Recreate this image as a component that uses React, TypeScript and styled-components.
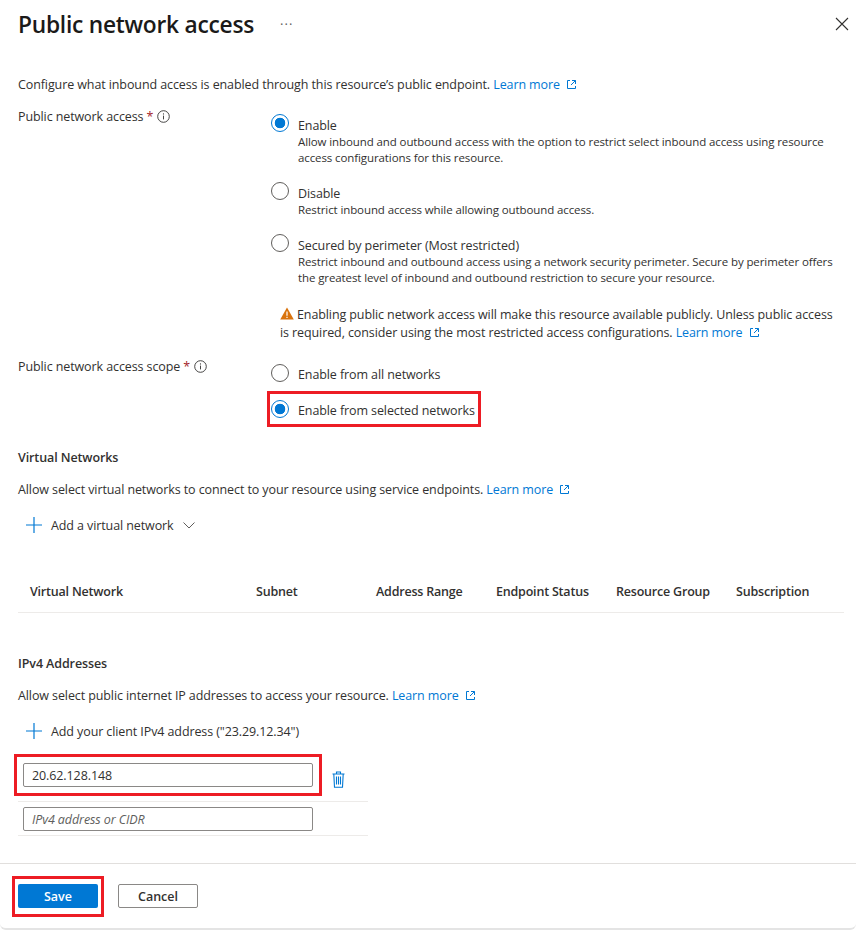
import React from "react";
import styled, { createGlobalStyle } from "styled-components";

const GlobalStyle = createGlobalStyle`
  html, body {
    margin: 0;
    padding: 0;
    background: #fff;
  }
  body {
    font-family: "Open Sans", "Liberation Sans", sans-serif;
    font-size: 12.5px;
    color: #323130;
    letter-spacing: -0.1px;
  }
`;

const ExternalIcon = () => (
  <ExternalSvg viewBox="0 0 11 11" width="11" height="11">
    <path d="M4 1.5H1.5v8h8V7M6 1.5h3.5V5M9.5 1.5 5 6" fill="none" stroke="#0078d4" strokeWidth="1" />
  </ExternalSvg>
);

const LearnMore = () => (
  <Link>
    Learn more <ExternalIcon />
  </Link>
);

const InfoIcon = () => (
  <InfoSvg viewBox="0 0 13 13" width="13" height="13">
    <circle cx="6.5" cy="6.5" r="5.8" fill="none" stroke="#323130" strokeWidth="0.9" />
    <path d="M6.5 5.6v3.8" stroke="#323130" strokeWidth="0.9" />
    <circle cx="6.5" cy="3.9" r="0.6" fill="#323130" />
  </InfoSvg>
);

const PlusIcon = () => (
  <svg viewBox="0 0 16 16" width="16" height="16">
    <path d="M8 0v16M0 8h16" stroke="#0078d4" strokeWidth="1.2" />
  </svg>
);

const Option = ({
  title,
  checked,
  children,
}: {
  title: string;
  checked?: boolean;
  children?: React.ReactNode;
}) => (
  <OptionRow>
    <Radio $checked={checked} />
    <div>
      <OptionTitle>{title}</OptionTitle>
      {children && <OptionDesc>{children}</OptionDesc>}
    </div>
  </OptionRow>
);

const App = () => {
  return (
    <Page>
      <GlobalStyle />
      <Header>
        <Title>Public network access</Title>
        <More>···</More>
        <CloseButton viewBox="0 0 14 14" width="14" height="14">
          <path d="M1 1l12 12M13 1L1 13" stroke="#323130" strokeWidth="1.1" />
        </CloseButton>
      </Header>

      <Body>
        <Intro>
          Configure what inbound access is enabled through this resource’s public endpoint. <LearnMore />
        </Intro>

        <FormRow>
          <FieldLabel>
            Public network access <Required>*</Required>
            <InfoIcon />
          </FieldLabel>
          <Options>
            <Option title="Enable" checked>
              Allow inbound and outbound access with the option to restrict select inbound access using resource
              access configurations for this resource.
            </Option>
            <Option title="Disable">Restrict inbound access while allowing outbound access.</Option>
            <Option title="Secured by perimeter (Most restricted)">
              Restrict inbound and outbound access using a network security perimeter. Secure by perimeter offers
              the greatest level of inbound and outbound restriction to secure your resource.
            </Option>
          </Options>
        </FormRow>

        <Warning>
          <WarningSvg viewBox="0 0 14 13" width="14" height="13">
            <path d="M7 0.5 13.8 12.5H0.2Z" fill="#d9730d" />
            <path d="M7 4.5v4.2M7 9.8v1.3" stroke="#fff" strokeWidth="1.2" />
          </WarningSvg>
          Enabling public network access will make this resource available publicly. Unless public access is
          required, consider using the most restricted access configurations. <LearnMore />
        </Warning>

        <ScopeRow>
          <FieldLabel>
            Public network access scope <Required>*</Required>
            <InfoIcon />
          </FieldLabel>
          <ScopeOptions>
            <ScopeOption>
              <Radio />
              <span>Enable from all networks</span>
            </ScopeOption>
            <HighlightedOption>
              <Radio $checked />
              <span>Enable from selected networks</span>
            </HighlightedOption>
          </ScopeOptions>
        </ScopeRow>

        <SectionTitle $top={21}>Virtual Networks</SectionTitle>
        <SectionText>
          Allow select virtual networks to connect to your resource using service endpoints. <LearnMore />
        </SectionText>
        <AddAction>
          <PlusIcon />
          <span>Add a virtual network</span>
          <svg viewBox="0 0 12 7" width="12" height="7">
            <path d="M0.5 0.5 6 6l5.5-5.5" fill="none" stroke="#605e5c" strokeWidth="1" />
          </svg>
        </AddAction>

        <TableHead>
          <span>Virtual Network</span>
          <span>Subnet</span>
          <span>Address Range</span>
          <span>Endpoint Status</span>
          <span>Resource Group</span>
          <span>Subscription</span>
        </TableHead>

        <SectionTitle $top={41}>IPv4 Addresses</SectionTitle>
        <SectionText>
          Allow select public internet IP addresses to access your resource. <LearnMore />
        </SectionText>
        <AddAction>
          <PlusIcon />
          <span>Add your client IPv4 address ("23.29.12.34")</span>
        </AddAction>

        <AddressList>
          <AddressRow $top={6} $bottom={13}>
            <InputHighlight>
              <AddressInput readOnly value="20.62.128.148" />
            </InputHighlight>
            <TrashButton viewBox="0 0 13 17" width="13" height="17">
              <path
                d="M0.5 3h12M4.5 3V1h4v2M1.8 3l0.7 13.2h8L11.2 3M4.5 5.5v8M6.5 5.5v8M8.5 5.5v8"
                fill="none"
                stroke="#0078d4"
                strokeWidth="1.1"
              />
            </TrashButton>
          </AddressRow>
          <AddressRow $top={5} $bottom={4}>
            <AddressInput readOnly placeholder="IPv4 address or CIDR" />
          </AddressRow>
        </AddressList>
      </Body>

      <Footer>
        <ButtonHighlight>
          <SaveButton>Save</SaveButton>
        </ButtonHighlight>
        <CancelButton>Cancel</CancelButton>
      </Footer>
    </Page>
  );
};

const Page = styled.div`
  width: 856px;
  height: 930px;
  box-sizing: border-box;
  border-bottom: 2px solid #e4e4e4;
  border-bottom-left-radius: 6px;
  border-bottom-right-radius: 6px;
  display: flex;
  flex-direction: column;
  overflow: hidden;
`;

const Header = styled.div`
  display: flex;
  align-items: center;
  height: 48px;
  padding: 0 7px 0 18px;
`;

const Title = styled.h1`
  margin: 0;
  font-size: 22.75px;
  font-weight: 600;
  color: #1b1a19;
  letter-spacing: -0.25px;
`;

const More = styled.span`
  margin-left: 26px;
  font-size: 13px;
  color: #605e5c;
  letter-spacing: 1px;
`;

const CloseButton = styled.svg`
  margin-left: auto;
`;

const Body = styled.div`
  flex: 1;
  padding: 27px 12px 0 18px;
`;

const Intro = styled.div`
  line-height: 20px;
`;

const Link = styled.span`
  color: #0078d4;
  white-space: nowrap;
`;

const ExternalSvg = styled.svg`
  margin-left: 3px;
  vertical-align: -1px;
`;

const InfoSvg = styled.svg`
  margin-left: 4px;
  vertical-align: -2px;
`;

const FormRow = styled.div`
  display: grid;
  grid-template-columns: 253px 1fr;
  margin-top: 2px;
`;

const FieldLabel = styled.div`
  padding-top: 10px;
  line-height: 20px;
`;

const Required = styled.span`
  color: #a4262c;
`;

const Options = styled.div`
  display: flex;
  flex-direction: column;
  gap: 19px;
  padding-top: 20px;
`;

const OptionRow = styled.div`
  display: flex;
  gap: 9px;
`;

const Radio = styled.span<{ $checked?: boolean }>`
  flex: none;
  width: 18px;
  height: 18px;
  box-sizing: border-box;
  border-radius: 50%;
  border: 1px solid ${(p) => (p.$checked ? "#0078d4" : "#605e5c")};
  background: ${(p) =>
    p.$checked ? "radial-gradient(circle, #0078d4 0 5px, #fff 5.6px)" : "#fff"};
  margin-top: -3px;
`;

const OptionTitle = styled.div`
  line-height: 18px;
`;

const OptionDesc = styled.div`
  font-size: 11.5px;
  line-height: 16px;
  width: 546px;
  margin-top: -1px;
`;

const Warning = styled.div`
  margin: 20px 4px 0 262px;
  line-height: 18px;
`;

const WarningSvg = styled.svg`
  margin-right: 3px;
  vertical-align: -1px;
`;

const ScopeRow = styled.div`
  display: grid;
  grid-template-columns: 249px 1fr;
  margin-top: 5px;
`;

const ScopeOptions = styled.div`
  display: flex;
  flex-direction: column;
  align-items: flex-start;
  padding-top: 17px;
`;

const ScopeOption = styled.div`
  display: flex;
  align-items: center;
  gap: 9px;
  height: 20px;
  padding-left: 4px;
`;

const HighlightedOption = styled(ScopeOption)`
  box-sizing: content-box;
  height: 28px;
  margin-top: 7px;
  padding: 2px 3px 0 1px;
  border: 3px solid #ed1c24;
`;

const SectionTitle = styled.div<{ $top: number }>`
  margin-top: ${(p) => p.$top}px;
  font-weight: 600;
  line-height: 20px;
`;

const SectionText = styled.div`
  margin-top: 12px;
  line-height: 20px;
`;

const AddAction = styled.div`
  display: flex;
  align-items: center;
  gap: 9px;
  height: 20px;
  margin-top: 15px;
  padding-left: 8px;
`;

const TableHead = styled.div`
  display: grid;
  grid-template-columns: 226px 120px 120px 120px 120px 1fr;
  align-items: center;
  height: 42px;
  margin-top: 35px;
  padding-left: 12px;
  border-bottom: 1px solid #edebe9;
  font-weight: 600;
  letter-spacing: -0.2px;
`;

const AddressList = styled.div`
  width: 350px;
  margin-top: 16px;
`;

const AddressRow = styled.div<{ $top: number; $bottom: number }>`
  display: flex;
  align-items: flex-start;
  padding: ${(p) => p.$top}px 0 ${(p) => p.$bottom}px 5px;
  border-bottom: 1px solid #edebe9;
`;

const InputHighlight = styled.div`
  display: flex;
  margin: -9px;
  padding: 6px;
  border: 3px solid #ed1c24;
`;

const AddressInput = styled.input`
  width: 290px;
  height: 24px;
  box-sizing: border-box;
  padding: 0 8px;
  border: 1px solid #8a8886;
  border-radius: 2px;
  font: inherit;
  letter-spacing: inherit;
  color: #323130;
  outline: none;
  &::placeholder {
    color: #605e5c;
    font-style: italic;
  }
`;

const TrashButton = styled.svg`
  margin: 8px 0 0 19px;
`;

const Footer = styled.div`
  display: flex;
  align-items: flex-start;
  gap: 20px;
  height: 65px;
  box-sizing: border-box;
  padding: 20px 18px 0;
  border-top: 1px solid #e1dfdd;
`;

const ButtonHighlight = styled.div`
  display: flex;
  margin: -8px -6px -9px;
  padding: 5px 3px 6px;
  border: 3px solid #ed1c24;
`;

const SaveButton = styled.button`
  width: 80px;
  height: 24px;
  border: none;
  border-radius: 2px;
  background: #0078d4;
  color: #fff;
  font: inherit;
  font-weight: 600;
`;

const CancelButton = styled.button`
  width: 80px;
  height: 24px;
  border: 1px solid #8a8886;
  border-radius: 2px;
  background: #fff;
  color: #323130;
  font: inherit;
  font-weight: 600;
`;

export default App;
